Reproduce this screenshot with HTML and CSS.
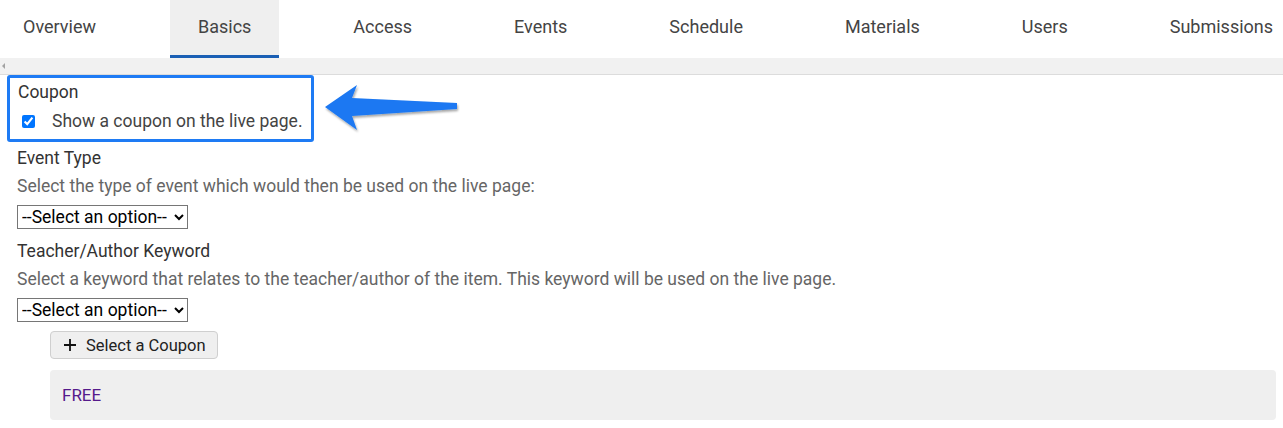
FILE: index.html
```html
<!DOCTYPE html>
<html lang="en">
<head>
    <meta charset="UTF-8">
    <meta name="viewport" content="width=device-width, initial-scale=1.0">
    <title>Event Basics</title>
    <link rel="stylesheet" href="styles.css">
</head>
<body>
    <div class="tabbar">
        <nav class="tabs">
            <a class="tab">Overview</a>
            <a class="tab active">Basics</a>
            <a class="tab">Access</a>
            <a class="tab">Events</a>
            <a class="tab">Schedule</a>
            <a class="tab">Materials</a>
            <a class="tab">Users</a>
            <a class="tab">Submissions</a>
        </nav>
        <div class="scrollstrip"><span class="scroll-arrow"></span></div>
    </div>

    <div class="content">
        <div class="highlight">
            <div class="field-label">Coupon</div>
            <label class="check-row">
                <input type="checkbox" checked>
                <span>Show a coupon on the live page.</span>
            </label>
        </div>

        <svg class="callout" width="150" height="60" viewBox="0 0 150 60">
            <defs>
                <filter id="shadow" x="-10%" y="-30%" width="120%" height="160%">
                    <feDropShadow dx="1" dy="2" stdDeviation="1.2" flood-color="#000" flood-opacity="0.35"/>
                </filter>
            </defs>
            <polygon filter="url(#shadow)" fill="#1b78f2"
                points="4,26 36,4 31,17 136,22 136,28 31,35 36,49"/>
        </svg>

        <div class="group">
            <div class="field-label">Event Type</div>
            <div class="field-desc">Select the type of event which would then be used on the live page:</div>
            <select class="picker"><option>--Select an option--</option></select>
        </div>

        <div class="group">
            <div class="field-label">Teacher/Author Keyword</div>
            <div class="field-desc">Select a keyword that relates to the teacher/author of the item. This keyword will be used on the live page.</div>
            <select class="picker"><option>--Select an option--</option></select>
        </div>

        <div class="coupon-area">
            <button type="button" class="coupon-btn">
                <svg width="14" height="14" viewBox="0 0 14 14"><path d="M7 1v12M1 7h12" stroke="#111" stroke-width="1.8"/></svg>
                Select a Coupon
            </button>
            <div class="coupon-list">
                <a href="#" class="coupon-link">FREE</a>
            </div>
        </div>
    </div>
</body>
</html>
```

FILE: styles.css
```css
body {
    margin: 0;
    font-family: Roboto, "Liberation Sans", Arial, sans-serif;
    color: #333;
    background: #fff;
    position: relative;
}
.tabbar {
    overflow: hidden;
}
.tabs {
    display: flex;
    gap: 46px;
    margin-left: -5px;
    white-space: nowrap;
}
.tab {
    display: block;
    padding: 0 28px;
    height: 55px;
    line-height: 53px;
    font-size: 18px;
    color: #444;
    border-bottom: 3px solid transparent;
}
.tab.active {
    background: #efefef;
    border-bottom-color: #1a5fb4;
}
.scrollstrip {
    height: 16px;
    background: #f1f1f1;
    border-bottom: 1px solid #dcdcdc;
    display: flex;
    align-items: center;
}
.scroll-arrow {
    width: 0;
    height: 0;
    margin-left: 2px;
    border-top: 3px solid transparent;
    border-bottom: 3px solid transparent;
    border-right: 3px solid #a3a3a3;
}
.content {
    padding: 0 7px 0 17px;
}
.highlight {
    display: inline-block;
    margin-left: -10px;
    padding: 2px 8px 3px 8px;
    border: 3px solid #1e7bf4;
    border-radius: 3px;
}
.field-label {
    font-size: 17.5px;
    line-height: 24px;
    color: #333;
}
.check-row {
    display: flex;
    align-items: center;
    height: 30px;
    margin-top: 2px;
    font-size: 17.5px;
    color: #444;
}
.check-row input {
    width: 13px;
    height: 13px;
    margin: 0 17px 0 4px;
}
.callout {
    position: absolute;
    left: 321px;
    top: 81px;
}
.group {
    margin-top: 4px;
}
.group + .group {
    margin-top: 10px;
}
.field-desc {
    font-size: 17.5px;
    line-height: 24px;
    color: #666;
    margin-top: 4px;
    margin-bottom: 7px;
}
.picker {
    display: block;
    height: 24px;
    padding-right: 4px;
    font-family: Roboto, "Liberation Sans", Arial, sans-serif;
    font-size: 17.5px;
    color: #000;
    background: #fff;
    border: 1px solid #767676;
    border-radius: 0;
}
.coupon-area {
    padding-left: 33px;
    padding-top: 9px;
}
.coupon-btn {
    display: flex;
    align-items: center;
    gap: 9px;
    height: 28px;
    padding: 0 11px 0 12px;
    font-family: Roboto, "Liberation Sans", Arial, sans-serif;
    font-size: 16.5px;
    color: #222;
    background: #efefef;
    border: 1px solid #cfcfcf;
    border-radius: 4px;
}
.coupon-list {
    margin-top: 11px;
    height: 50px;
    padding: 0 12px;
    display: flex;
    align-items: center;
    background: #efefef;
    border-radius: 4px;
}
.coupon-link {
    font-size: 17px;
    color: #551a8b;
    text-decoration: none;
}
```
